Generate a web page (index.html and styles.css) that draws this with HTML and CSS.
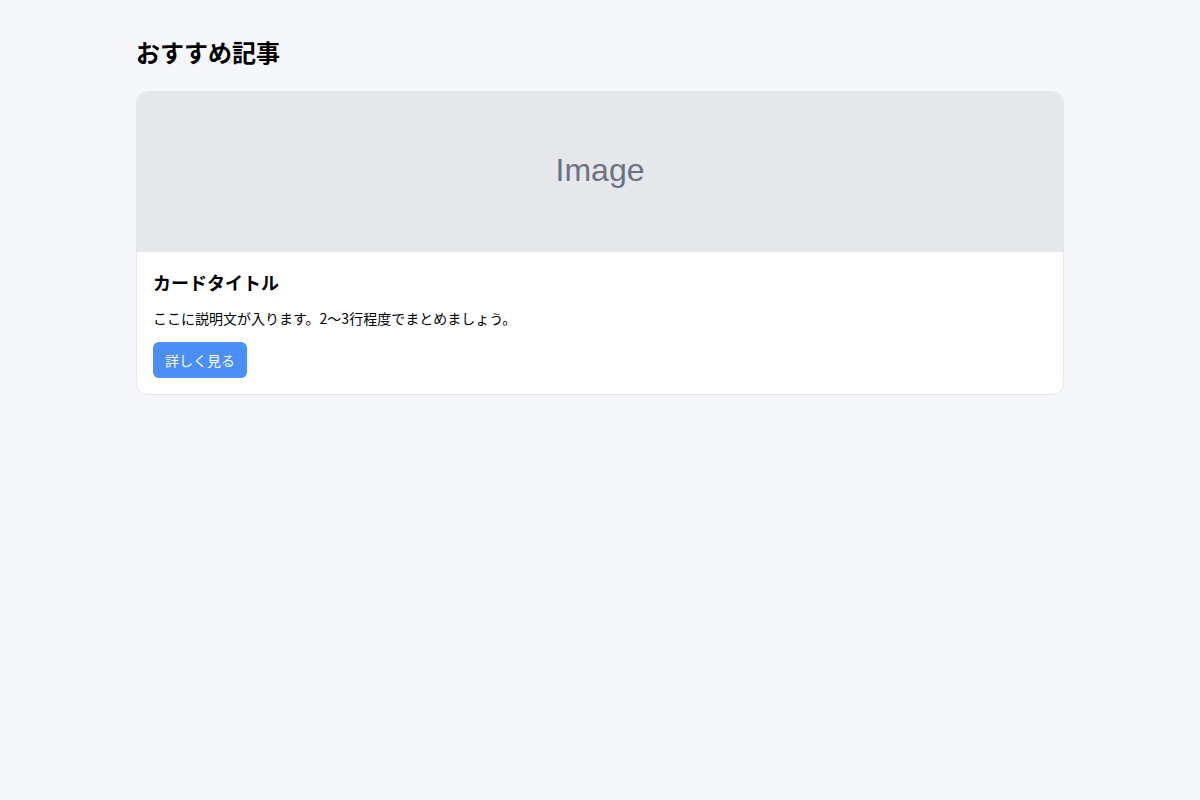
FILE: index.html
```html
<!DOCTYPE html>
<html lang="ja">
<head>
  <meta charset="UTF-8">
  <title>おすすめ記事</title>
  <link rel="stylesheet" href="styles.css">
</head>
<body>
  <div class="container">
    <h1>おすすめ記事</h1>
    <div class="card">
      <div class="card-image">Image</div>
      <div class="card-body">
        <h2 class="card-title">カードタイトル</h2>
        <p class="card-text">ここに説明文が入ります。2〜3行程度でまとめましょう。</p>
        <a href="#" class="btn">詳しく見る</a>
      </div>
    </div>
  </div>
</body>
</html>
```

FILE: styles.css
```css
body {
  margin: 0;
  font-family: "Noto Sans CJK JP", "Noto Sans", sans-serif;
  background: #f5f7fb;
  color: #000;
}
.container {
  max-width: 928px;
  margin: 0 auto;
  padding: 34px 16px;
}
h1 {
  font-size: 24px;
  line-height: 36px;
  font-weight: 700;
  margin: 0 0 21px;
}
.card {
  background: #fff;
  border: 1px solid #e5e7eb;
  border-radius: 12px;
  overflow: hidden;
}
.card-image {
  height: 160px;
  box-sizing: border-box;
  padding-bottom: 4px;
  background: #e5e7eb;
  color: #6b7280;
  font-family: "Liberation Sans", Arial, sans-serif;
  font-size: 32px;
  display: flex;
  align-items: center;
  justify-content: center;
}
.card-body {
  padding: 16px;
}
.card-title {
  font-size: 18px;
  line-height: 28px;
  font-weight: 700;
  margin: 0 0 11px;
}
.card-text {
  font-size: 14px;
  line-height: 22px;
  margin: 0 0 13px;
}
.btn {
  display: inline-block;
  background: #4b8ef8;
  color: #fff;
  font-size: 14px;
  line-height: 20px;
  padding: 8px 12px;
  border-radius: 6px;
  text-decoration: none;
}
```
